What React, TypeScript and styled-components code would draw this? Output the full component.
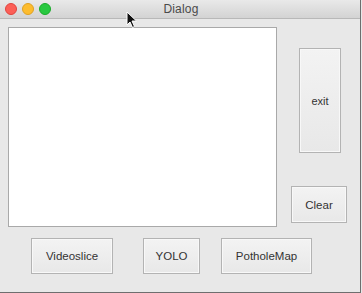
import React from "react";
import styled, { createGlobalStyle } from "styled-components";

const Global = createGlobalStyle`
  html, body { margin: 0; padding: 0; background: #e8e8e8; }
  body { font-family: "Liberation Sans", Arial, sans-serif; }
`;

const Window = styled.div`
  position: relative;
  width: 360px;
  height: 292px;
  background: #e8e8e8;
  border-right: 1px solid #6e6e6e;
  border-bottom: 1px solid #6e6e6e;
  display: flex;
  flex-direction: column;
  overflow: hidden;
`;

const TitleBar = styled.div`
  height: 18px;
  flex: none;
  display: flex;
  align-items: center;
  background: linear-gradient(#e9e9e9, #d3d3d3);
  border-bottom: 1px solid #b8b8b8;
  padding-left: 5px;
`;

const Lights = styled.div`
  display: flex;
  gap: 5px;
`;

const Light = styled.span<{ $c: string; $b: string }>`
  width: 12px;
  height: 12px;
  border-radius: 50%;
  background: ${(p) => p.$c};
  box-sizing: border-box;
  border: 0.5px solid ${(p) => p.$b};
`;

const Title = styled.div`
  flex: 1;
  text-align: center;
  font-size: 12px;
  color: #4a4a4a;
  margin-right: 49px;
  letter-spacing: 0.2px;
`;

const Body = styled.div`
  flex: 1;
  display: flex;
  flex-direction: column;
  padding: 8px 0 0 8px;
`;

const TopRow = styled.div`
  display: flex;
`;

const Canvas = styled.div`
  width: 267px;
  height: 198px;
  background: #ffffff;
  border: 1px solid #a9a9a9;
`;

const SideCol = styled.div`
  display: flex;
  flex-direction: column;
  align-items: flex-start;
`;

const Button = styled.div<{ $w: number; $h: number }>`
  box-sizing: border-box;
  width: ${(p) => p.$w}px;
  height: ${(p) => p.$h}px;
  border: 1px solid #b3b3b3;
  background: linear-gradient(#f3f3f3, #e8e8e8);
  box-shadow: inset 0 0 0 1px #f8f8f8;
  display: flex;
  align-items: center;
  justify-content: center;
  font-size: 11.5px;
  color: #333;
`;

const ExitButton = styled(Button)`
  margin: 21px 0 0 22px;
  font-size: 11px;
`;

const ClearButton = styled(Button)`
  margin: 33px 0 0 14px;
`;

const BottomRow = styled.div`
  display: flex;
  margin-top: 11px;
  padding-left: 23px;
`;

const Spaced = styled(Button)<{ $ml: number }>`
  margin-left: ${(p) => p.$ml}px;
`;

const Cursor = styled.svg`
  position: absolute;
  left: 126px;
  top: 11px;
`;

export default function App() {
  return (
    <>
      <Global />
      <Window>
        <TitleBar>
          <Lights>
            <Light $c="#fc5f57" $b="#e0443e" />
            <Light $c="#fdbc2e" $b="#dea123" />
            <Light $c="#28c840" $b="#1aab29" />
          </Lights>
          <Title>Dialog</Title>
        </TitleBar>
        <Body>
          <TopRow>
            <Canvas />
            <SideCol>
              <ExitButton $w={42} $h={105}>exit</ExitButton>
              <ClearButton $w={56} $h={37}>Clear</ClearButton>
            </SideCol>
          </TopRow>
          <BottomRow>
            <Spaced $ml={0} $w={82} $h={36}>Videoslice</Spaced>
            <Spaced $ml={30} $w={57} $h={36}>YOLO</Spaced>
            <Spaced $ml={21} $w={91} $h={36}>PotholeMap</Spaced>
          </BottomRow>
        </Body>
        <Cursor width="12" height="18" viewBox="0 0 12 18">
          <path d="M1 1 L1 14 L4 11 L6.5 16.5 L8.5 15.5 L6 10 L10.5 10 Z" fill="#111" stroke="#fff" strokeWidth="1" />
        </Cursor>
      </Window>
    </>
  );
}
